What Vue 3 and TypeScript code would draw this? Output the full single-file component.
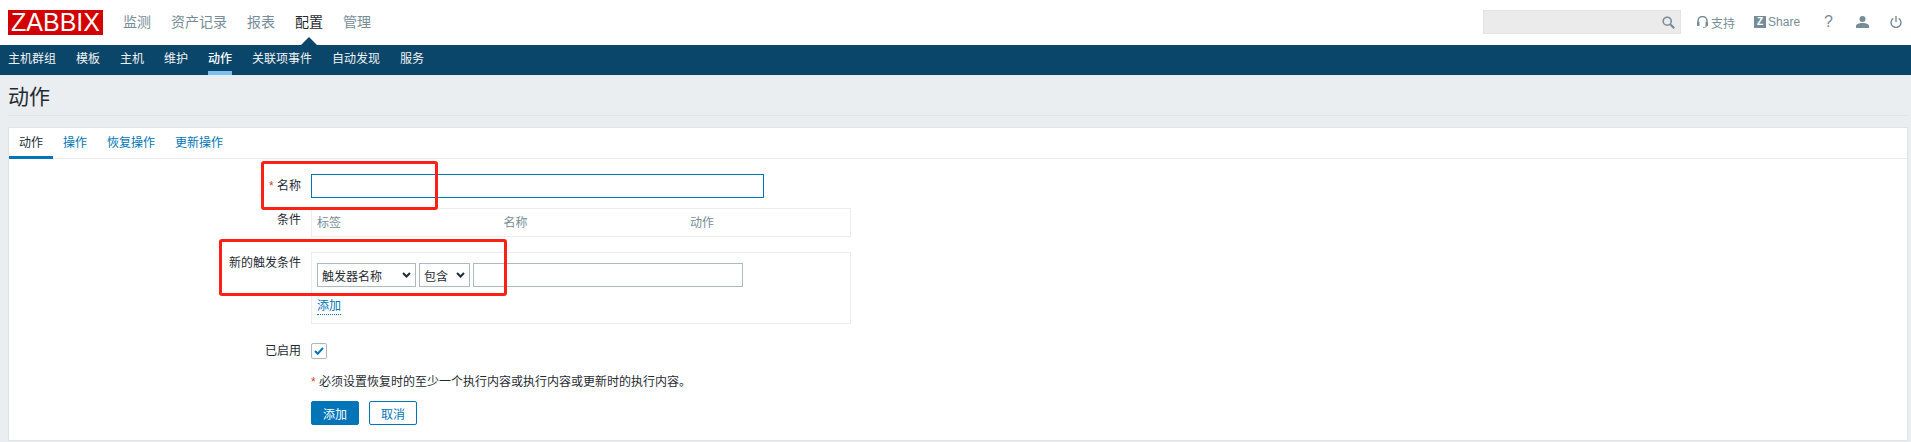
<script setup lang="ts">
const primaryNav = ['监测', '资产记录', '报表', '配置', '管理']
const secondaryNav = ['主机群组', '模板', '主机', '维护', '动作', '关联项事件', '自动发现', '服务']
const tabs = ['动作', '操作', '恢复操作', '更新操作']
const columns = ['标签', '名称', '动作']
</script>

<template>
	<div class="page">
		<header class="top">
			<div class="logo">ZABBIX</div>
			<nav class="primary">
				<a v-for="item in primaryNav" :key="item" :class="{ current: item === '配置' }">{{ item }}</a>
			</nav>
			<div class="tools">
				<div class="search">
					<svg width="13" height="13" viewBox="0 0 13 13" fill="none" stroke="#768d99">
						<circle cx="5.2" cy="5.2" r="4" stroke-width="1.6" />
						<path d="M8.2 8.2 12.2 12.2" stroke-width="2.2" />
					</svg>
				</div>
				<a class="tool support">
					<svg width="11" height="12" viewBox="0 0 11 12" fill="none" stroke="#768d99">
						<path d="M1 7V5a4.5 4.5 0 0 1 9 0v2" stroke-width="1.5" />
						<rect x="0" y="6" width="2.5" height="4" fill="#768d99" stroke="none" />
						<rect x="8.5" y="6" width="2.5" height="4" fill="#768d99" stroke="none" />
						<path d="M9.5 10c0 1-1.5 1.4-3.5 1.4" stroke-width="1" />
					</svg>
					<span>支持</span>
				</a>
				<a class="tool share">
					<span class="z">Z</span>
					<span>Share</span>
				</a>
				<a class="tool help">?</a>
				<a class="tool user">
					<svg width="13" height="12" viewBox="0 0 13 12" fill="#768d99">
						<circle cx="6.5" cy="3" r="3" />
						<path d="M0 12v-2c0-1.8 3-3 6.5-3s6.5 1.200 6.500 3v2z" />
					</svg>
				</a>
				<a class="tool power">
					<svg width="12" height="12" viewBox="0 0 12 12" fill="none" stroke="#768d99" stroke-width="1.4">
						<path d="M3.300 2.300a5 5 0 1 0 5.400 0" />
						<path d="M6 0v6" />
					</svg>
				</a>
			</div>
		</header>

		<nav class="secondary">
			<a v-for="item in secondaryNav" :key="item" :class="{ active: item === '动作' }">{{ item }}</a>
		</nav>

		<main class="content">
			<h1 class="title">动作</h1>
			<section class="card">
				<div class="tabs">
					<a v-for="tab in tabs" :key="tab" :class="{ active: tab === '动作' }">{{ tab }}</a>
				</div>
				<form class="form">
					<div class="row">
						<label><i>*</i> 名称</label>
						<input class="name" type="text" />
					</div>
					<div class="row">
						<label class="top-label">条件</label>
						<div class="box conditions">
							<span v-for="col in columns" :key="col">{{ col }}</span>
						</div>
					</div>
					<div class="row">
						<label class="top-label new-label">新的触发条件</label>
						<div class="box new-condition">
							<div class="fields">
								<div class="select wide">
									触发器名称
									<svg width="9" height="6" viewBox="0 0 9 6" fill="none" stroke="#1f2c33" stroke-width="2"><path d="M1 1l3.500 3.500L8 1" /></svg>
								</div>
								<div class="select narrow">
									包含
									<svg width="9" height="6" viewBox="0 0 9 6" fill="none" stroke="#1f2c33" stroke-width="2"><path d="M1 1l3.500 3.500L8 1" /></svg>
								</div>
								<input class="value" type="text" />
							</div>
							<a class="add-link">添加</a>
						</div>
					</div>
					<div class="row enabled">
						<label>已启用</label>
						<span class="check">
							<svg width="10" height="8" viewBox="0 0 10 8" fill="none" stroke="#0275b8" stroke-width="2"><path d="M1 4l2.700 2.700L9 1" /></svg>
						</span>
					</div>
					<div class="row note">
						<label></label>
						<p><i>*</i> 必须设置恢复时的至少一个执行内容或执行内容或更新时的执行内容。</p>
					</div>
					<div class="row actions">
						<label></label>
						<div class="buttons">
							<button type="button" class="primary-btn">添加</button>
							<button type="button" class="ghost-btn">取消</button>
						</div>
					</div>
				</form>
			</section>
		</main>

		<div class="mark mark-name"></div>
		<div class="mark mark-new"></div>
	</div>
</template>

<style>
html,
body {
	margin: 0;
	background: #ebeef0;
}
</style>

<style scoped>
.page {
	position: relative;
	height: 442px;
	overflow: hidden;
	background: #ebeef0;
	font-family: "Liberation Sans", "Noto Sans CJK SC", sans-serif;
	font-size: 12px;
	color: #1f2c33;
}

.top {
	height: 45px;
	box-sizing: border-box;
	padding: 10px 0 0 8px;
	display: flex;
	background: #fff;
}

.logo {
	width: 95px;
	height: 25px;
	background: #d40000;
	color: #fff;
	font-size: 25px;
	line-height: 25px;
	text-align: center;
}

.primary {
	display: flex;
	gap: 20px;
	margin-left: 20px;
	font-size: 14px;
	line-height: 25px;
	color: #768d99;
}

.primary a {
	position: relative;
}

.primary a.current {
	color: #1f2c33;
}

.primary a.current::after {
	content: "";
	position: absolute;
	left: 50%;
	bottom: 0;
	width: 16px;
	height: 8px;
	margin-left: -8px;
	background: #0a466a;
	clip-path: polygon(50% 0, 100% 100%, 0 100%);
}

.tools {
	margin-left: auto;
	display: flex;
	align-items: flex-start;
	color: #768d99;
	font-size: 12px;
}

.search {
	width: 198px;
	height: 24px;
	box-sizing: border-box;
	border: 1px solid #e4e4e4;
	background: #ebebeb;
	display: flex;
	align-items: center;
	justify-content: flex-end;
	padding-right: 5px;
}

.tool {
	display: flex;
	align-items: center;
	height: 24px;
}

.support {
	margin-left: 16px;
	gap: 3px;
}

.share {
	margin-left: 19px;
	gap: 2px;
}

.z {
	width: 12px;
	height: 12px;
	background: #768d99;
	color: #fff;
	font-weight: 700;
	font-size: 10px;
	line-height: 12px;
	text-align: center;
}

.help {
	margin-left: 24px;
	font-size: 16px;
}

.user {
	margin-left: 23px;
}

.power {
	margin-left: 21px;
	margin-right: 9px;
}

.secondary {
	height: 30px;
	box-sizing: border-box;
	padding-left: 8px;
	display: flex;
	gap: 20px;
	background: #0a466a;
	color: #f2f2f2;
	line-height: 29px;
}

.secondary a.active {
	height: 30px;
	box-sizing: border-box;
	border-bottom: 4px solid #7cc0ef;
	color: #fff;
	font-weight: 500;
}

.content {
	padding: 0 3px 0 8px;
}

.title {
	margin: 0;
	height: 41px;
	box-sizing: border-box;
	border-bottom: 1px solid #dfe4e7;
	font-size: 21px;
	font-weight: 400;
	line-height: 44px;
	color: #1f2c33;
}

.card {
	margin-top: 11px;
	height: 314px;
	box-sizing: border-box;
	background: #fff;
	border: 1px solid #dfe4e7;
}

.tabs {
	height: 31px;
	box-sizing: border-box;
	display: flex;
	gap: 20px;
	padding-left: 10px;
	border-bottom: 1px solid #ebeef0;
	line-height: 30px;
	color: #0275b8;
}

.tabs a {
	position: relative;
	flex: none;
}

.tabs a.active {
	color: #1f2c33;
}

.tabs a.active::after {
	content: "";
	position: absolute;
	left: -10px;
	right: -10px;
	bottom: -1px;
	height: 3px;
	background: #0275b8;
}

.form {
	padding-top: 15px;
}

.row {
	display: grid;
	grid-template-columns: 292px 1fr;
	column-gap: 10px;
	align-items: center;
}

.row label {
	text-align: right;
	line-height: 24px;
}

.row i {
	font-style: normal;
	color: #e33734;
}

.name {
	width: 453px;
	height: 24px;
	box-sizing: border-box;
	border: 1px solid #0275b8;
	border-radius: 0;
	outline: 0;
	background: #fff;
}

.row .top-label {
	align-self: start;
	margin-top: 10px;
}

.box {
	width: 540px;
	box-sizing: border-box;
	border: 1px solid #ebeef0;
}

.conditions {
	height: 29px;
	margin-top: 10px;
	padding-left: 5px;
	display: flex;
	line-height: 29px;
	color: #768d99;
}

.conditions span {
	flex: none;
	width: 186.5px;
}

.row .new-label {
	margin-top: 15px;
	line-height: 22px;
}

.new-condition {
	height: 72px;
	margin-top: 15px;
	padding: 10px 5px 0;
}

.fields {
	display: flex;
	gap: 3px;
}

.select {
	height: 24px;
	box-sizing: border-box;
	border: 1px solid #acbbc2;
	padding: 0 4px;
	display: flex;
	align-items: center;
	justify-content: space-between;
}

.select.wide {
	width: 99px;
}

.select.narrow {
	width: 51px;
}

.value {
	width: 270px;
	height: 24px;
	box-sizing: border-box;
	border: 1px solid #acbbc2;
	border-radius: 0;
	outline: 0;
	background: #fff;
}

.add-link {
	display: inline-block;
	margin-top: 12px;
	line-height: 15px;
	color: #0275b8;
	border-bottom: 1px dotted #0275b8;
}

.enabled {
	margin-top: 15px;
}

.check {
	width: 16px;
	height: 16px;
	box-sizing: border-box;
	border: 1px solid #acbbc2;
	border-radius: 2px;
	display: flex;
	align-items: center;
	justify-content: center;
}

.note {
	margin-top: 7px;
}

.note p {
	margin: 0;
	line-height: 24px;
}

.actions {
	margin-top: 7px;
}

.buttons {
	display: flex;
	gap: 10px;
}

.buttons button {
	width: 48px;
	height: 24px;
	padding: 0;
	border-radius: 2px;
	font: inherit;
}

.primary-btn {
	border: 1px solid #0275b8;
	background: #0275b8;
	color: #fff;
}

.ghost-btn {
	border: 1px solid #0275b8;
	background: #fff;
	color: #0275b8;
}

.mark {
	position: absolute;
	box-sizing: border-box;
	border: 3px solid #fb2116;
	border-radius: 3px;
	pointer-events: none;
}

.mark-name {
	left: 261px;
	top: 161px;
	width: 177px;
	height: 49px;
}

.mark-new {
	left: 219px;
	top: 239px;
	width: 288px;
	height: 57px;
}
</style>
